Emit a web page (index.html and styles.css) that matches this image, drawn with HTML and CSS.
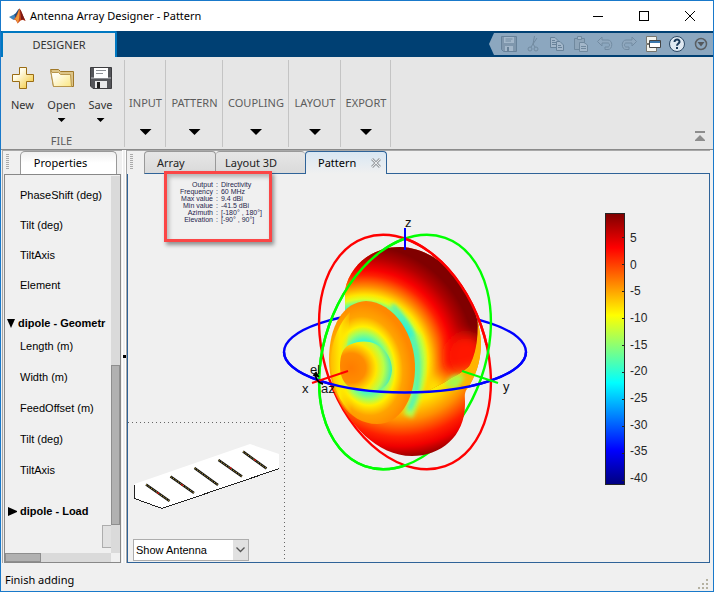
FILE: index.html
```html
<!DOCTYPE html>
<html lang="en">
<head>
<meta charset="utf-8">
<title>Antenna Array Designer - Pattern</title>
<link rel="stylesheet" href="styles.css">
</head>
<body>
<div class="window">
  <header class="titlebar">
    <svg class="logo" width="17" height="16" viewBox="0 0 17 16" aria-hidden="true">
      <path d="M0 9 5 6.500 7.500 9 4.500 12Z" fill="#3f86bd"/>
      <path d="M5 6.500C8 5 8 2 10.500 0.500L9 6 6.500 9.500Z" fill="#1d4f80"/>
      <path d="M10.500 0.500C8.500 4 8 8 4.500 12 6.500 11 7.500 13 8.500 15.500 11.500 13 12 10.500 16.500 13 14 8 12.500 2.500 10.500 0.500Z" fill="#c8431c"/>
      <path d="M10.500 0.500C9 5 8 9 5.500 11.500 7 11 8 12 8.500 15.500 10.500 13 10.500 6 10.500 0.500Z" fill="#f09a3c"/>
      <path d="M10.500 0.500C12.500 3 14 8 16.500 13 14 11 13 11.500 12 12 12 8 11.500 4 10.500 0.500Z" fill="#7c1a16"/>
    </svg>
    <h1>Antenna Array Designer - Pattern</h1>
    <div class="window-buttons">
      <button type="button" aria-label="Minimize"><svg width="12" height="12"><path d="M1 6.500H11" stroke="#000" fill="none"/></svg></button>
      <button type="button" aria-label="Maximize"><svg width="12" height="12"><rect x="1.500" y="1.500" width="9" height="9" stroke="#000" fill="none"/></svg></button>
      <button type="button" aria-label="Close"><svg width="12" height="12"><path d="M1 1 11 11M11 1 1 11" stroke="#000" fill="none"/></svg></button>
    </div>
  </header>

  <div class="ribbon">
    <button type="button" class="ribbon-tab">DESIGNER</button>
    <div class="quick">
      <button type="button" aria-label="Save" class="dim"><svg width="18" height="18"><path d="M1.500 1.500H16.500V16.500H3.500L1.500 14.500Z" fill="#7d94a9" stroke="#5f7a92"/><path d="M4 2H14V8H4Z" fill="#a9bccd"/><path d="M5.500 4H12.500M5.500 6H11" stroke="#6c859b"/><path d="M5 11H13V16H5Z" fill="#a9bccd"/><path d="M7 12H9V16H7Z" fill="#60798f"/></svg></button>
      <button type="button" aria-label="Cut" class="dim"><svg width="18" height="18" fill="none" stroke="#6a8297"><path d="M10.500 1 9 9 7 12M13 3 9 9 11 12"/><circle cx="6" cy="14" r="2"/><circle cx="12" cy="14" r="2"/></svg></button>
      <button type="button" aria-label="Copy" class="dim"><svg width="18" height="18" fill="#a9bccd" stroke="#617b92"><path d="M2.500 2.500H7L10 5.500V12.500H2.500Z"/><path d="M4 5.500H7M4 7.500H8M4 9.500H8"/><path d="M8.500 6.500H12L15.500 10V15.500H8.500Z"/><path d="M10 10.500H13M10 12.500H14"/></svg></button>
      <button type="button" aria-label="Paste" class="dim"><svg width="18" height="18" fill="#8fa5b8" stroke="#6a8297"><path d="M2.500 3.500H12.500V14.500H2.500Z"/><path d="M5.500 1.500H9.500V4.500H5.500Z" fill="#a9bccd"/><path d="M7.500 7.500H12L15.500 10V16.500H7.500Z" fill="#a9bccd"/><path d="M9 11.500H14M9 13.500H14"/></svg></button>
      <button type="button" aria-label="Undo" class="dim"><svg width="18" height="18"><path d="M1.500 6.500 6 2V5H12C17 5 17 14.500 12 14.500H9V12H12C14 12 14 8 12 8H6V11Z" fill="#93aabf" stroke="#6c859b"/></svg></button>
      <button type="button" aria-label="Redo" class="dim"><svg width="18" height="18"><path d="M16.500 6.500 12 2V5H6C1 5 1 14.500 6 14.500H9V12H6C4 12 4 8 6 8H12V11Z" fill="#93aabf" stroke="#6c859b"/></svg></button>
      <button type="button" aria-label="Switch window"><svg width="18" height="18"><path d="M2.500 1.500H12.500V8.500H2.500Z" fill="#f4f4ee" stroke="#77766f"/><path d="M2.500 9.500H12.500V16.500H2.500Z" fill="#f4f4ee" stroke="#77766f"/><path d="M5.500 5.500H16.500V12.500H5.500Z" fill="#fff" stroke="#454545"/><path d="M6 6H16V8H6Z" fill="#3c78ad"/></svg></button>
      <button type="button" aria-label="Help"><svg width="18" height="18"><circle cx="9" cy="9" r="7.500" fill="#dfe9f2" stroke="#2c4864"/><path d="M6.500 7C6.500 3.500 12 4 11.500 7 11.300 8.500 9 8.600 9 10.800" fill="none" stroke="#1b3a5a" stroke-width="2"/><path d="M8 12H10V14H8Z" fill="#1b3a5a"/></svg></button>
      <button type="button" aria-label="More"><svg width="18" height="18"><circle cx="9" cy="9" r="5.500" fill="none" stroke="#5b5f63" stroke-width="1.500"/><path d="M5.500 7H12.500L9 11.500Z" fill="#54585c"/></svg></button>
    </div>
  </div>

  <div class="toolstrip">
    <section class="section file">
      <div class="file-buttons">
        <button type="button">
          <svg width="24" height="24"><defs><linearGradient id="gold" x1="0" y1="0" x2="1" y2="1"><stop offset="0.300" stop-color="#fffce8"/><stop offset="1" stop-color="#f2c224"/></linearGradient><linearGradient id="cream" x1="0" y1="0" x2="1" y2="1"><stop offset="0.300" stop-color="#fffdf0"/><stop offset="1" stop-color="#fbe680"/></linearGradient></defs><path d="M8.500 1.500H15.500V8.500H22.500V15.500H15.500V22.500H8.500V15.500H1.500V8.500H8.500Z" fill="url(#gold)" stroke="#9a6c14"/></svg>
          <span>New</span>
        </button>
        <button type="button">
          <svg width="24" height="24"><path d="M0.500 3.500H8.500L10.500 5.500H23.500V20.500H3.500Z" fill="#dcc488" stroke="#a07828"/><path d="M0.500 3.500 3.500 20.500H21.500L20.500 8.500H10.500L8.500 6.500H2Z" fill="url(#cream)" stroke="#b8964c"/></svg>
          <span>Open</span><i class="caret small"></i>
        </button>
        <button type="button">
          <svg width="24" height="24"><path d="M1.500 1.500H22.500V22.500H4L1.500 20Z" fill="#55565a" stroke="#3d3d40"/><path d="M2 11H22V13H2Z" fill="#8b8c90"/><path d="M5 2H19V12H5Z" fill="#fff"/><path d="M7 4.500H17M7 7.500H14" stroke="#8d9095"/><path d="M6 15H18V22H6Z" fill="#e9e9ea"/><path d="M8 16H11V22H8Z" fill="#222"/></svg>
          <span>Save</span><i class="caret small"></i>
        </button>
      </div>
      <h2>FILE</h2>
    </section>
    <button type="button" class="section">INPUT<i class="caret"></i></button>
    <button type="button" class="section">PATTERN<i class="caret"></i></button>
    <button type="button" class="section">COUPLING<i class="caret"></i></button>
    <button type="button" class="section">LAYOUT<i class="caret"></i></button>
    <button type="button" class="section">EXPORT<i class="caret"></i></button>
    <button type="button" class="collapse" aria-label="Collapse toolstrip"><svg width="12" height="12"><path d="M1 1H11V3H1ZM6 5 11 10V11H1V10Z" fill="#8c8c8c"/></svg></button>
  </div>

  <main class="workspace">
    <aside class="side">
      <div class="tabs">
        <i class="grip"></i>
        <button type="button" class="side-tab">Properties</button>
      </div>
      <div class="scroller">
        <div class="props">
          <ul class="rows first"><li>PhaseShift (deg)</li><li>Tilt (deg)</li><li>TiltAxis</li><li>Element</li></ul>
          <h3><svg width="9" height="9"><path d="M0 0H8L4 9Z"/></svg>dipole - Geometr</h3>
          <ul class="rows"><li>Length (m)</li><li>Width (m)</li><li>FeedOffset (m)</li><li>Tilt (deg)</li><li>TiltAxis</li></ul>
          <h3 class="closed"><svg width="9" height="9"><path d="M0 0 9 4V5L0 9Z"/></svg>dipole - Load</h3>
          <div class="stub"></div>
        </div>
        <div class="vbar"><i></i></div>
        <div class="hbar"><i></i></div>
      </div>
    </aside>
    <div class="divider"><i></i></div>
    <section class="docs">
      <div class="tabs">
        <i class="grip"></i>
        <button type="button" class="doc-tab array">Array</button>
        <button type="button" class="doc-tab layout">Layout 3D</button>
        <button type="button" class="doc-tab active">Pattern<svg width="10" height="10" viewBox="0 0 10 10"><path d="M1 1 9 9M9 1 1 9" stroke="#a0a4a8" stroke-width="3"/><path d="M1 1 9 9M9 1 1 9" stroke="#e8eaec"/></svg></button>
        <span class="tab-fill"></span>
      </div>
      <div class="figure">
        <div class="info">
          <table>
            <tr><th>Output</th><td>:</td><td>Directivity</td></tr>
            <tr><th>Frequency</th><td>:</td><td>60 MHz</td></tr>
            <tr><th>Max value</th><td>:</td><td>9.4 dBi</td></tr>
            <tr><th>Min value</th><td>:</td><td>-41.5 dBi</td></tr>
            <tr><th>Azimuth</th><td>:</td><td>[-180° , 180°]</td></tr>
            <tr><th>Elevation</th><td>:</td><td>[-90° , 90°]</td></tr>
          </table>
        </div>
        <div class="antenna">
          <svg width="150" height="68" viewBox="132 442 150 68">
            <path d="M134.500 483 250 443 279 453V468L163 507 134.500 497Z" fill="#fff"/>
            <path d="M134.500 484V497.500L162 507.500 279.500 467.500" fill="none" stroke="#222" shape-rendering="crispEdges"/>
            <g stroke="#111" stroke-width="2.400"><path d="M146 483.500 169.500 500M170.500 475.500 194 492M194.500 467 218 484M218.500 459 242 475.500M243 450.500 266.500 467.500"/></g>
            <g stroke="#b59a35" stroke-dasharray="1.500 1.500"><path d="M146 483.500 169.500 500M170.500 475.500 194 492M194.500 467 218 484M218.500 459 242 475.500M243 450.500 266.500 467.500"/></g>
            <g fill="#d01010"><circle cx="158" cy="492" r="1"/><circle cx="182" cy="484" r="1"/><circle cx="230.500" cy="467" r="1"/><circle cx="255" cy="459" r="1"/></g>
          </svg>
          <label class="picker"><select aria-label="Antenna display"><option>Show Antenna</option><option>Hide Antenna</option></select><svg width="15" height="19"><path d="M3.500 7.500 7.500 11.500 11.500 7.500" fill="none" stroke="#555" stroke-width="1.300"/></svg></label>
        </div>
        <svg class="pattern" width="250" height="270" viewBox="285 210 250 270" role="img" aria-label="Directivity pattern">
          <defs>
            <radialGradient id="upper" gradientUnits="userSpaceOnUse" cx="0" cy="0" r="140" gradientTransform="translate(364 362) scale(0.960 1)">
              <stop offset="0.390" stop-color="#20f4e0"/><stop offset="0.420" stop-color="#78ff88"/><stop offset="0.450" stop-color="#e0ff20"/><stop offset="0.480" stop-color="#ffe600"/><stop offset="0.540" stop-color="#ff8c00"/><stop offset="0.620" stop-color="#ff2000"/><stop offset="0.660" stop-color="#f80000"/><stop offset="0.750" stop-color="#b00000"/><stop offset="0.830" stop-color="#800000"/>
            </radialGradient>
            <radialGradient id="lower" gradientUnits="userSpaceOnUse" cx="400" cy="340" r="118">
              <stop offset="0.300" stop-color="#80ff80"/><stop offset="0.420" stop-color="#e8ff18"/><stop offset="0.540" stop-color="#ffe400"/><stop offset="0.680" stop-color="#ff9000"/><stop offset="0.820" stop-color="#ff2000"/><stop offset="0.900" stop-color="#f00000"/><stop offset="1" stop-color="#900000"/>
            </radialGradient>
            <radialGradient id="disk" gradientUnits="userSpaceOnUse" cx="0" cy="0" r="64" gradientTransform="translate(366 366) rotate(-10) scale(0.730 1)">
              <stop offset="0.400" stop-color="#38f8d0"/><stop offset="0.520" stop-color="#a0ff60"/><stop offset="0.620" stop-color="#fff000"/><stop offset="0.780" stop-color="#ffa400"/><stop offset="0.980" stop-color="#ff8800"/>
            </radialGradient>
            <radialGradient id="core" gradientUnits="userSpaceOnUse" cx="351" cy="368" r="42">
              <stop offset="0" stop-color="#ff7c00"/><stop offset="0.350" stop-color="#ff8c00"/><stop offset="0.600" stop-color="#ffe800"/><stop offset="0.780" stop-color="#b8ff48"/><stop offset="0.980" stop-color="#40e8c0"/>
            </radialGradient>
            <linearGradient id="warmLeft" gradientUnits="userSpaceOnUse" x1="328" y1="0" x2="352" y2="0"><stop offset="0" stop-color="#ffae00"/><stop offset="0.500" stop-color="#ffea00"/><stop offset="1" stop-color="#ffea00" stop-opacity="0"/></linearGradient>
            <filter id="soft" x="-50%" y="-50%" width="200%" height="200%"><feGaussianBlur stdDeviation="6"/></filter>
            <filter id="fine" x="-50%" y="-50%" width="200%" height="200%"><feGaussianBlur stdDeviation="2"/></filter>
            <clipPath id="bodyClip"><path d="M345 330V290C350 265 372 247 400 247 430 248 449 267 463 287 474 304 480 325 481 343 481 362 475 378 467 389 464 393 465 397 465 402 466 436 441 456 412 456 377 456 348 424 333 389Z"/></clipPath>
            <clipPath id="lobeClip"><path d="M320 240H478C482 300 480 350 470 365 463 373 452 377 445 382L418 396 320 380Z"/></clipPath>
            <clipPath id="leftHalf"><path d="M285 210H405V480H285Z"/></clipPath>
            <clipPath id="upperRight"><path d="M405 210H535V345H405Z"/></clipPath>
          </defs>
          <g fill="none" stroke-width="2.400">
            <ellipse cx="405" cy="352" rx="121" ry="40.500" stroke="#00f"/>
            <ellipse cx="0" cy="0" rx="121" ry="80.500" transform="translate(405 352) rotate(70.600)" stroke="#f00"/>
            <ellipse cx="0" cy="0" rx="121" ry="80.500" transform="translate(405 352) rotate(-70.600)" stroke="#0f0"/>
          </g>
          <g clip-path="url(#bodyClip)">
            <path d="M320 240H490V460H320Z" fill="url(#lower)"/>
            <g clip-path="url(#lobeClip)">
              <path d="M320 240H490V400H320Z" fill="url(#upper)"/>
              <ellipse cx="466" cy="356" rx="20" ry="22" fill="#ff1400" filter="url(#soft)"/>
              <path d="M424 400 440 372 462 372 480 366 480 400Z" fill="#ff8c00" filter="url(#soft)"/>
              <path d="M420 400 428 372 442 380 450 400Z" fill="#ffe600" filter="url(#soft)"/>
            </g>
            <path d="M477 310 484 310 482 365 468 390 458 382C474 365 480 345 477 310Z" fill="#ffb400"/>
            <path d="M445 386C449 375 458 373 465 377L457 389Z" fill="#a8f848" filter="url(#fine)"/>
            <path d="M415 335C424 360 422 385 408 416" fill="none" stroke="#b0ff50" stroke-width="10" filter="url(#fine)"/>
            <path d="M392 305C410 322 423 350 417 385 416 395 413 402 409 410" fill="none" stroke="#35f0d8" stroke-width="4" filter="url(#fine)"/>
          </g>
          <path d="M366 301C394 302 416 335 415 370 414 401 399 424 377 424 348 424 329 393 329 360 329 326 343 302 366 301Z" fill="url(#disk)"/>
          <path d="M350 312C335 328 329 350 332 375 335 392 343 408 356 416L358 390 345 370Z" fill="url(#warmLeft)"/>
          <path d="M349 345C372 334 392 350 392 370 391 385 381 393 365 391 348 391 340 381 340 366 340 355 343 348 349 345Z" fill="url(#core)"/>
          <g fill="none" stroke-width="2.400">
            <g clip-path="url(#upperRight)"><ellipse cx="0" cy="0" rx="121" ry="80.500" transform="translate(405 352) rotate(70.600)" stroke="#f00"/></g>
            <g clip-path="url(#leftHalf)"><ellipse cx="0" cy="0" rx="121" ry="80.500" transform="translate(405 352) rotate(-70.600)" stroke="#0f0"/></g>
            <path d="M284 352A121 40.500 0 0 0 526 352" stroke="#00f"/>
            <path d="M405 228V250" stroke="#00f" stroke-width="2"/>
            <path d="M312 383 348 371" stroke="#f00" stroke-width="2"/>
            <path d="M462 371 498 383" stroke="#0f0" stroke-width="2"/>
            <path d="M316 373C315 379 317 382 323 384M313.500 376 316 373 318.500 377" stroke="#000" stroke-width="2"/>
          </g>
          <g class="axis"><text x="405" y="227">z</text><text x="302" y="393">x</text><text x="503" y="391">y</text><text x="310" y="374">el</text><text x="321" y="393">az</text></g>
        </svg>
        <div class="colorbar">
          <div class="scale"></div>
          <ol><li>5</li><li>0</li><li>-5</li><li>-10</li><li>-15</li><li>-20</li><li>-25</li><li>-30</li><li>-35</li><li>-40</li></ol>
        </div>
      </div>
    </section>
  </main>

  <footer class="status"><span>Finish adding</span>
    <svg width="12" height="12" fill="#b5b1a1"><path d="M8 0h2v2h-2zM4 4h2v2h-2zM8 4h2v2h-2zM0 8h2v2h-2zM4 8h2v2h-2zM8 8h2v2h-2z"/></svg>
  </footer>
</div>
</body>
</html>
```
FILE: styles.css
```css
* { box-sizing: border-box; }
body { margin: 0; background: #f0f0f0; color: #000; font: 11px/16px "Noto Sans", "Open Sans", sans-serif; }
button { margin: 0; padding: 0; border: 0; background: none; color: inherit; font: inherit; }
h1, h2, h3, ul, ol { margin: 0; padding: 0; font-size: inherit; font-weight: normal; list-style: none; }
svg { display: block; flex: none; }

.window { display: flex; flex-direction: column; min-height: 100vh; border: 1px solid #1979ca; }

.titlebar { display: flex; align-items: center; height: 30px; padding-left: 8px; background: #fff; }
.titlebar h1 { flex: 1; margin-left: 4px; }
.window-buttons { display: flex; }
.window-buttons button { display: grid; place-items: center; width: 46px; height: 28px; }

.ribbon { display: flex; justify-content: space-between; align-items: flex-end; height: 26px; background: #004073; }
.ribbon-tab { width: 116px; height: 26px; border: 2px solid #0078c1; border-bottom: 0; border-radius: 2px 2px 0 0; background: #e6e6e6; color: #333; }
.quick { display: flex; align-items: center; align-self: center; height: 22px; padding-left: 8px; background: #8ca7bf; clip-path: polygon(0 50%, 5px 0, 100% 0, 100% 100%, 5px 100%); }
.quick button { display: grid; place-items: center; width: 24px; height: 22px; }
.quick .dim { opacity: 0.8; }

.toolstrip { display: grid; grid-template-columns: 124px 41px 57px 66px 52px 50px 1fr; height: 93px; padding: 3px 0 2px; border-bottom: 1px solid #8a8a8a; background: #e6e6e6; }
.section { display: flex; flex-direction: column; align-items: center; border-right: 1px solid #c4c4c4; color: #5c5c5c; }
button.section { gap: 18px; padding-top: 35px; padding-left: 1px; }
.section.file { justify-content: space-between; padding-right: 2px; }
.file h2 { line-height: 12px; }
.file-buttons { display: flex; align-self: flex-start; padding: 6px 0 0 2px; }
.file-buttons button { display: flex; flex-direction: column; align-items: center; width: 39px; color: #333; }
.file-buttons span { margin-top: 7px; }
.caret { width: 12px; height: 6px; background: #000; clip-path: polygon(0 0, 100% 0, 50% 100%); }
.caret.small { width: 8px; height: 4px; margin-top: 5px; }
.collapse { align-self: end; justify-self: end; margin: 0 7px 5px 0; }

.workspace { display: flex; flex: 1; padding: 0 3px 2px 1px; }
.side { display: flex; flex-direction: column; width: 120px; padding: 0 1px 0 1px; border: solid #a8a8a8; border-width: 1px 0 0 1px; }
.tabs { display: flex; flex: none; height: 23px; }
.grip { flex: none; width: 3px; height: 15px; margin: 3px 11px 0 3px; background: repeating-linear-gradient(#aaa 0 1px, transparent 1px 2px); }
.side-tab { width: 97px; height: 23px; padding-right: 16px; border: 1px solid #999; border-bottom: 0; border-radius: 5px 5px 0 0; background: linear-gradient(#f0f0f0, #fff 50%); }
.side .grip { margin: 3px 11px 0 2px; }
.scroller { flex: 1; display: grid; grid-template: 1fr 9px / 1fr 9px; border: 1px solid #888; }
.props { position: relative; overflow: hidden; padding-top: 12px; white-space: nowrap; font: 11px/16px "Liberation Sans", sans-serif; }
.rows { display: flex; flex-direction: column; gap: 15px; padding: 7px 0 0 15px; }
.rows.first { gap: 14px; padding-top: 0; }
.props h3 { display: flex; align-items: center; gap: 2px; padding: 22px 0 0 2px; font-weight: bold; }
.props .closed { gap: 3px; padding-top: 25px; padding-left: 3px; }
.stub { position: absolute; right: 0; bottom: 5px; width: 9px; height: 23px; border: 1px solid #adadad; border-right: 0; background: #e1e1e1; }
.vbar { display: flex; flex-direction: column; margin-top: 1px; background: #dadada; }
.vbar i { height: 160px; margin: auto 0 28px; border: 1px solid #8e8e8e; background: #b1b1b1; }
.hbar { background: #dadada; }
.hbar i { display: block; width: 36px; height: 9px; border: 1px solid #8e8e8e; background: #b1b1b1; }
.divider { display: grid; align-items: center; width: 4px; border: solid #fff; border-width: 0 1px; }
.divider i { width: 3px; height: 3px; background: #000; }

.docs { display: flex; flex: 1; flex-direction: column; min-width: 0; border: solid #a8a8a8; border-width: 1px 0 0 1px; }
.doc-tab { height: 23px; border: 1px solid #999; border-bottom-color: #2f6398; border-radius: 4px 4px 0 0; background: linear-gradient(#e6e6e6, #dadada); color: #222; text-align: left; }
.array { width: 72px; padding-left: 12px; }
.layout { width: 89px; padding-left: 9px; border-left: 0; border-right: 0; }
.active { display: flex; align-items: center; justify-content: space-between; width: 82px; padding: 0 5px 0 12px; border: 1px solid #2f6398; border-bottom: 0; background: linear-gradient(#d9e7f3, #f0f0f0); color: #000; }
.tab-fill { flex: 1; border-bottom: 1px solid #2f6398; }
.figure { position: relative; flex: 1; display: grid; grid-template: 1fr 140px / 157px 1fr 107px; border: 1px solid #2f6398; border-top: 0; }

.info { position: absolute; top: -3px; left: 36px; z-index: 1; width: 108px; height: 71px; padding-top: 7px; border: 3px solid #fb4646; box-shadow: 2px 3px 4px rgba(0, 0, 0, 0.4), inset 2px 3px 4px rgba(0, 0, 0, 0.25); color: #1f1f4c; font: 7px/7px "Liberation Sans", sans-serif; }
.info table { border-collapse: collapse; }
.info td, .info th { padding: 0 0 0 3px; font-weight: normal; white-space: nowrap; }
.info th { width: 46px; padding: 0; text-align: right; }

.antenna { grid-area: 2 / 1; display: flex; flex-direction: column; justify-content: space-between; align-items: flex-start; padding: 21px 0 1px 4px; background: repeating-linear-gradient(90deg, #666 0 1px, transparent 1px 4px) top / 100% 1px no-repeat, repeating-linear-gradient(#666 0 1px, transparent 1px 4px) right / 1px 100% no-repeat; }
.picker { position: relative; display: block; width: 116px; margin-left: 1px; }
.picker select { display: block; width: 100%; height: 22px; padding: 0 2px; border: 1px solid #adadad; border-radius: 0; appearance: none; background: linear-gradient(90deg, #fff calc(100% - 15px), #e1e1e1 calc(100% - 15px)); font: 11px "Liberation Sans", sans-serif; }
.picker svg { position: absolute; top: 1px; right: 1px; pointer-events: none; }

.pattern { grid-area: 1 / 2 / 3 / 3; margin-top: 36px; overflow: visible; }
.axis { font: 13px "Liberation Sans", sans-serif; fill: #111; }
.colorbar { grid-area: 1 / 3 / 3 / 4; display: flex; height: 272px; margin: 39px 0 0 3px; gap: 5px; color: #262626; font: 12px/16px "Liberation Sans", sans-serif; }
.scale { width: 20px; border: 1px solid #262626; background: repeating-linear-gradient(transparent 0 26px, #262626 26px 27px) right 0 top -3px / 2px 100% no-repeat, linear-gradient(#800000, #f00 12.5%, #ff0 37.5%, #0ff 62.5%, #00f 87.5%, #000080); }
.colorbar ol { display: flex; flex-direction: column; justify-content: space-between; height: 256px; margin-top: 17px; }

.status { display: flex; justify-content: space-between; align-items: center; height: 26px; padding: 4px 3px 0 4px; }
.status svg { align-self: flex-end; }
```
